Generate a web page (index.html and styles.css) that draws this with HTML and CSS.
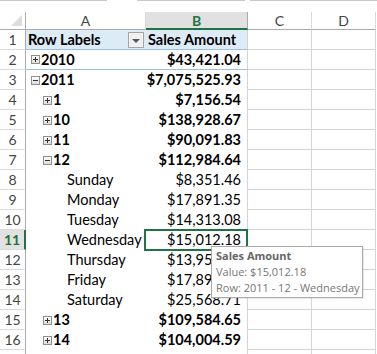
FILE: index.html
```html
<!DOCTYPE html>
<html>
<head>
<meta charset="utf-8">
<link rel="stylesheet" href="styles.css">
</head>
<body>
<div class="page">
  <div class="topline">
    <span class="seg s1"></span><span class="gap g1"></span><span class="seg s2"></span><span class="gap g2"></span><span class="seg s3"></span>
  </div>
  <div class="sheet">
    <div class="hdr corner"><span class="tri"></span></div>
    <div class="hdr">A</div>
    <div class="hdr sel">B</div>
    <div class="hdr">C</div>
    <div class="hdr">D</div>

    <div class="rn">1</div>
    <div class="a head">Row Labels<span class="filter"><span class="arrow"></span></span></div>
    <div class="b head">Sales Amount</div>
    <div class="c"></div><div class="d"></div>

    <div class="rn">2</div>
    <div class="a l0 bold sep"><span class="tg plus"></span>2010</div>
    <div class="b bold sep">$43,421.04</div>
    <div class="c"></div><div class="d"></div>

    <div class="rn">3</div>
    <div class="a l0 bold"><span class="tg minus"></span>2011</div>
    <div class="b bold">$7,075,525.93</div>
    <div class="c"></div><div class="d"></div>

    <div class="rn">4</div>
    <div class="a l1 bold"><span class="tg plus"></span>1</div>
    <div class="b bold">$7,156.54</div>
    <div class="c"></div><div class="d"></div>

    <div class="rn">5</div>
    <div class="a l1 bold"><span class="tg plus"></span>10</div>
    <div class="b bold">$138,928.67</div>
    <div class="c"></div><div class="d"></div>

    <div class="rn">6</div>
    <div class="a l1 bold"><span class="tg plus"></span>11</div>
    <div class="b bold">$90,091.83</div>
    <div class="c"></div><div class="d"></div>

    <div class="rn">7</div>
    <div class="a l1 bold"><span class="tg minus"></span>12</div>
    <div class="b bold">$112,984.64</div>
    <div class="c"></div><div class="d"></div>

    <div class="rn">8</div>
    <div class="a l2">Sunday</div>
    <div class="b">$8,351.46</div>
    <div class="c"></div><div class="d"></div>

    <div class="rn">9</div>
    <div class="a l2">Monday</div>
    <div class="b">$17,891.35</div>
    <div class="c"></div><div class="d"></div>

    <div class="rn">10</div>
    <div class="a l2">Tuesday</div>
    <div class="b">$14,313.08</div>
    <div class="c"></div><div class="d"></div>

    <div class="rn selrow">11</div>
    <div class="a l2">Wednesday</div>
    <div class="b active">$15,012.18<span class="cursor"></span></div>
    <div class="c"></div><div class="d"></div>

    <div class="rn">12</div>
    <div class="a l2">Thursday</div>
    <div class="b">$13,951.27</div>
    <div class="c"></div><div class="d"></div>

    <div class="rn">13</div>
    <div class="a l2">Friday</div>
    <div class="b">$17,893.52</div>
    <div class="c"></div><div class="d"></div>

    <div class="rn">14</div>
    <div class="a l2">Saturday</div>
    <div class="b">$25,568.71</div>
    <div class="c"></div><div class="d"></div>

    <div class="rn">15</div>
    <div class="a l1 bold"><span class="tg plus"></span>13</div>
    <div class="b bold">$109,584.65</div>
    <div class="c"></div><div class="d"></div>

    <div class="rn">16</div>
    <div class="a l1 bold"><span class="tg plus"></span>14</div>
    <div class="b bold">$104,004.59</div>
    <div class="c"></div><div class="d"></div>

    <div class="rn"></div>
    <div class="a"></div>
    <div class="b"></div>
    <div class="c"></div><div class="d"></div>
  </div>

  <div class="tooltip">
    <div class="tt-title">Sales Amount</div>
    <div>Value: $15,012.18</div>
    <div>Row: 2011 - 12 - Wednesday</div>
  </div>
</div>
</body>
</html>
```

FILE: styles.css
```css
* { box-sizing: border-box; }
html, body { margin: 0; padding: 0; background: #fff; }
body { width: 377px; height: 354px; overflow: hidden; }
.page { position: relative; width: 377px; height: 354px; overflow: hidden; font-family: Lato, "Liberation Sans", sans-serif; }

.topline { display: flex; height: 12px; align-items: flex-start; }
.topline .seg { height: 1px; background: #c8c8c8; }
.topline .s1 { width: 107px; }
.topline .g1 { width: 30px; }
.topline .s2 { width: 108px; }
.topline .g2 { width: 5px; }
.topline .s3 { flex: 1; }

.sheet {
  display: grid;
  grid-template-columns: 26px 120px 102px 64px 64px;
  grid-template-rows: 18px;
  grid-auto-rows: 20px;
  font-size: 14.5px;
  color: #000;
}

.hdr {
  border-right: 1px solid #d9d9d9;
  border-bottom: 1px solid #ababab;
  text-align: center;
  font-size: 14px;
  line-height: 17px;
  color: #444;
  background: #fff;
}
.hdr.corner { position: relative; border-right-color: #ababab; }
.hdr.corner .tri {
  position: absolute; right: 3px; bottom: 3px; width: 0; height: 0;
  border-left: 11px solid transparent;
  border-bottom: 11px solid #dcdcdc;
}
.hdr.sel {
  background: #e1e1e1;
  color: #217346;
  font-weight: bold;
  border-bottom: 2px solid #217346;
  border-right-color: #ababab;
}

.rn {
  border-right: 1px solid #ababab;
  border-bottom: 1px solid #dadada;
  text-align: center;
  font-size: 14px;
  line-height: 20px;
  color: #444;
}
.rn.selrow {
  background: #e1e1e1;
  color: #217346;
  font-weight: bold;
  border-right: 2px solid #217346;
}

.a, .b {
  line-height: 20px;
  white-space: nowrap;
  overflow: visible;
}
.a { display: flex; align-items: center; padding-left: 2px; position: relative; }
.b { text-align: right; padding-right: 6px; border-right: 1px solid #d4d4d4; }
.c, .d { border-right: 1px solid #d4d4d4; border-bottom: 1px solid #d4d4d4; }

.bold { font-weight: bold; }
.head { background: #ddebf7; font-weight: bold; border-bottom: 1px solid #9bc2e6; line-height: 19px; }
.b.head { border-right-color: #d4d4d4; text-align: left; padding-left: 2px; }
.sep { border-bottom: 1px solid #9bc2e6; line-height: 19px; }

.l0 { padding-left: 5px; }
.l1 { padding-left: 17px; }
.l2 { padding-left: 41px; }

.tg {
  position: relative;
  display: inline-block;
  width: 9px; height: 9px;
  margin-right: 1px;
  border: 1px solid #8f8f8f;
  background: linear-gradient(#ffffff, #dcdcdc);
  flex: none;
}
.tg::before {
  content: ""; position: absolute; left: 1px; top: 3px; width: 5px; height: 1px; background: #333;
}
.tg.plus::after {
  content: ""; position: absolute; left: 3px; top: 1px; width: 1px; height: 5px; background: #333;
}

.filter {
  position: absolute;
  left: 102px; top: 2px;
  width: 16px; height: 16px;
  border: 1px solid #a6a6a6;
  background: #f0f0f0;
}
.filter .arrow {
  position: absolute; left: 3px; top: 6px; width: 0; height: 0;
  border-left: 4px solid transparent;
  border-right: 4px solid transparent;
  border-top: 4px solid #595959;
}

.active { position: relative; }
.cursor {
  position: absolute;
  left: -2px; top: -1px;
  width: 104px; height: 22px;
  border: 2px solid #217346;
}

.tooltip {
  position: absolute;
  left: 211px; top: 246px;
  width: 152px; height: 52px;
  border: 1px solid #aaaaaa;
  background: #ffffff;
  color: #767676;
  font-family: "Open Sans", "Liberation Sans", sans-serif;
  font-size: 11px;
  line-height: 16px;
  padding: 1px 0 0 4px;
  white-space: nowrap;
  box-shadow: 1px 1px 1px rgba(0,0,0,0.08);
}
.tt-title { font-weight: bold; color: #666; }
```
